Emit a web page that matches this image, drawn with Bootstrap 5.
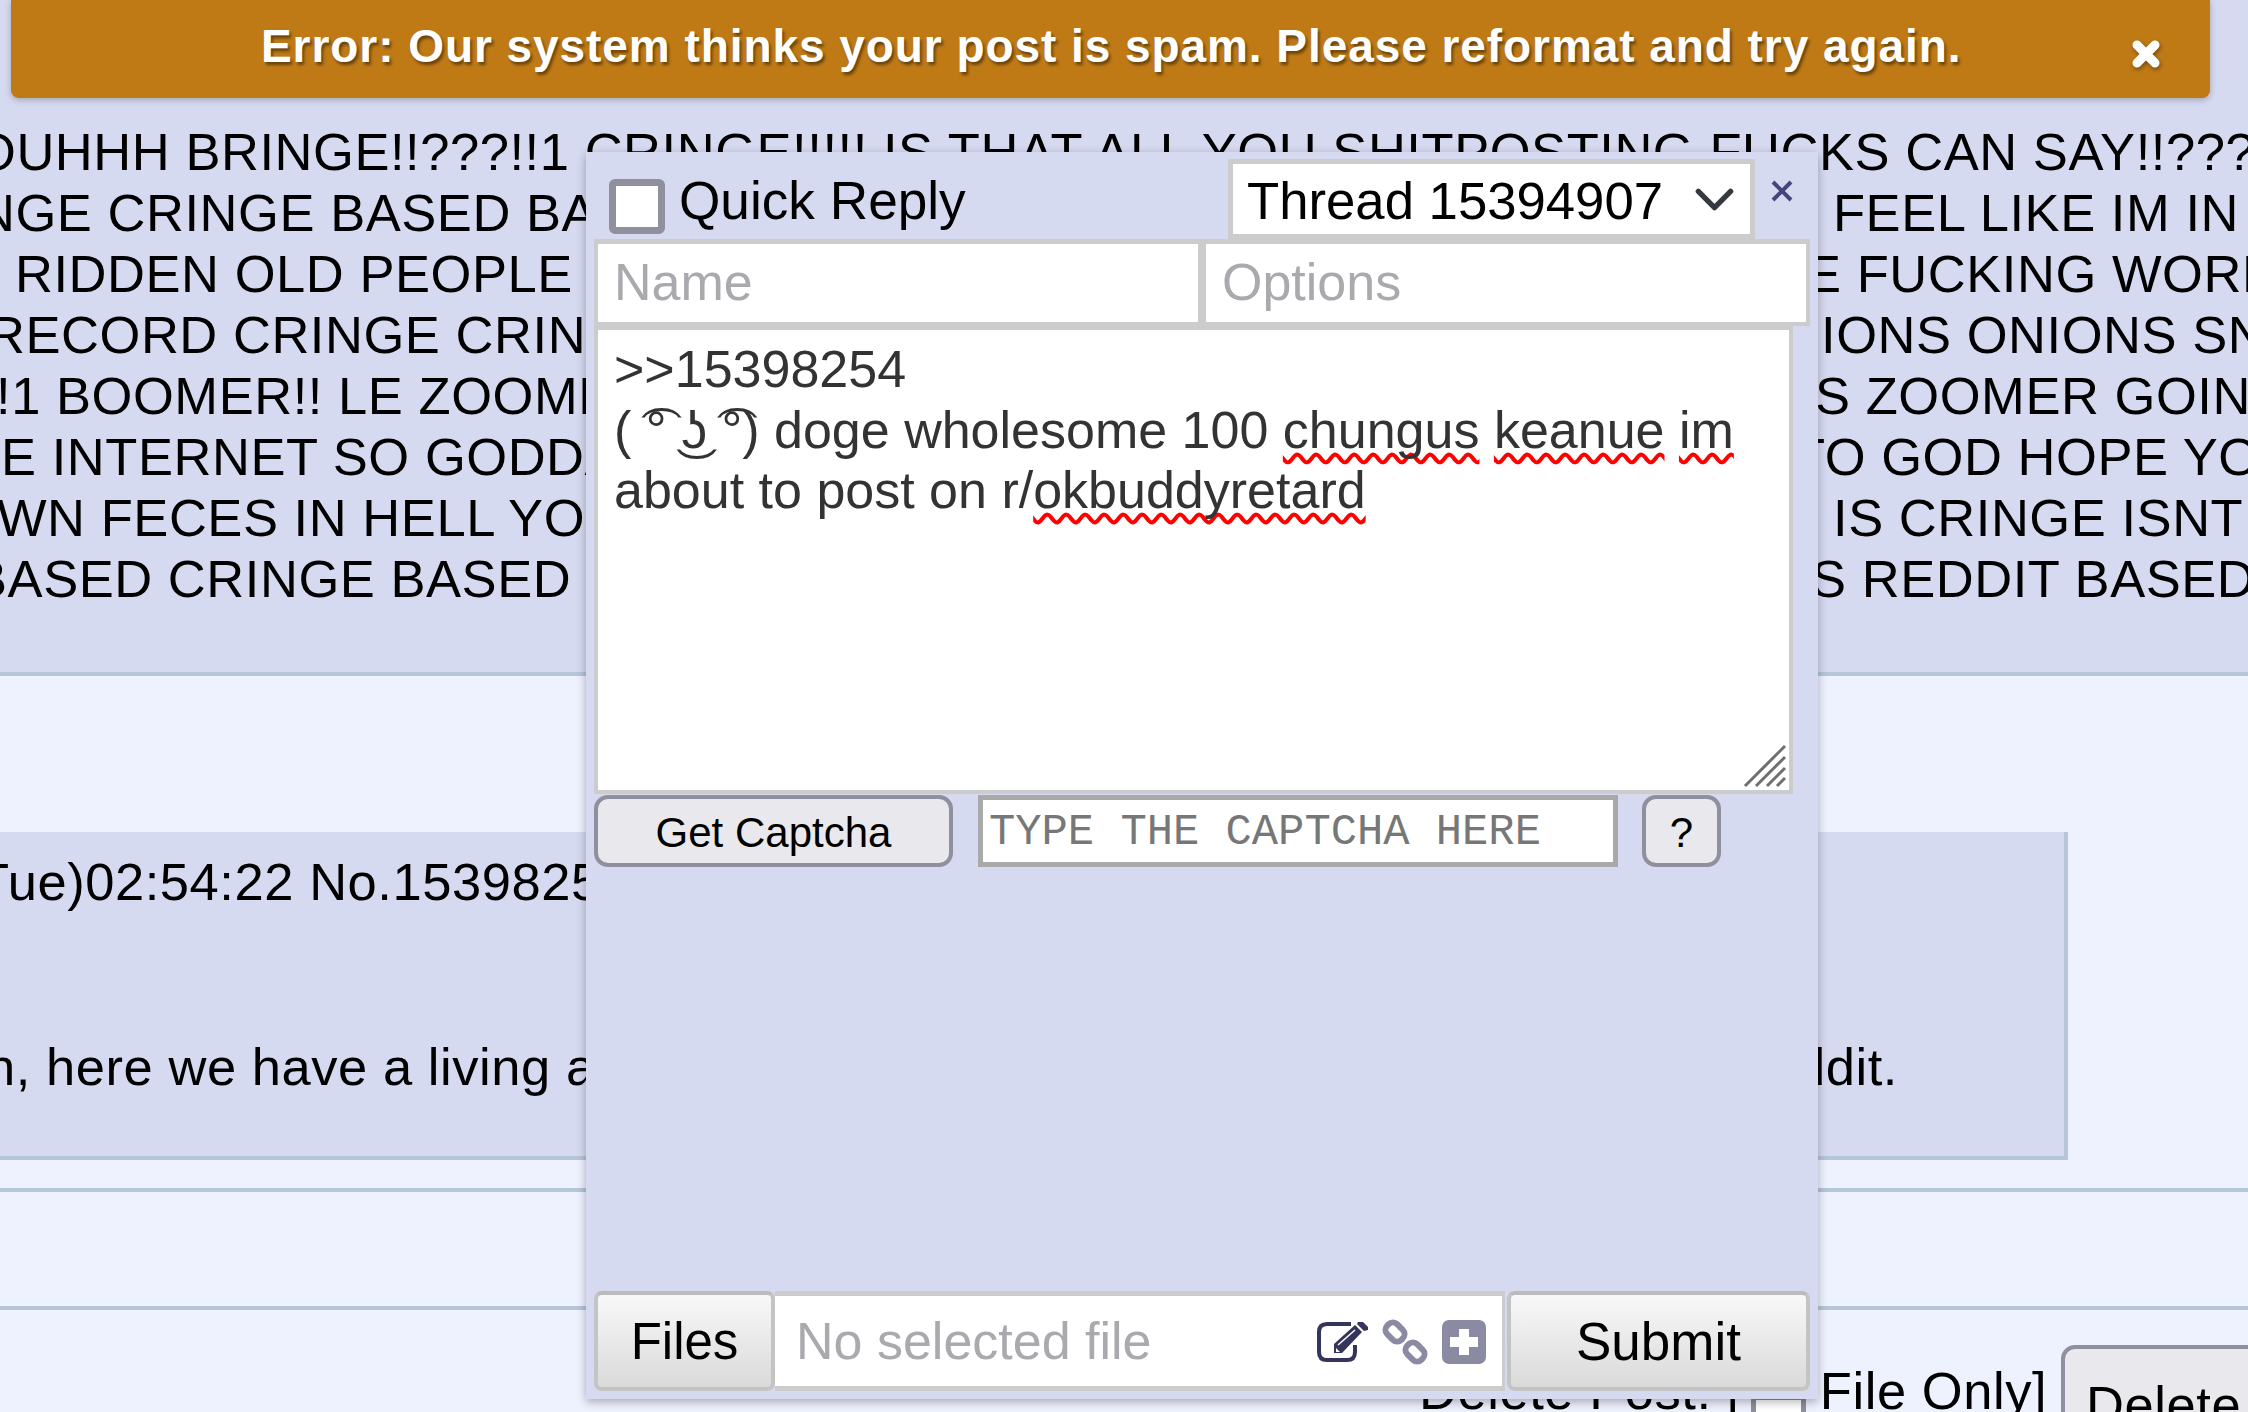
<!DOCTYPE html>
<html lang="en">
<head>
    <meta charset="UTF-8">
    <meta name="viewport" content="width=device-width, initial-scale=1.0">
    <title>Quick Reply</title>
    <link href="https://cdn.jsdelivr.net/npm/bootstrap@5.3.0/dist/css/bootstrap.min.css" rel="stylesheet">
    <style>
        html, body { height: 1412px; overflow: hidden; }
        body {
            background: #eef2ff;
            color: #000;
            font-family: "Liberation Sans", Arial, sans-serif;
            font-size: 52.5px;
            letter-spacing: .55px;
            line-height: 61px;
        }
        /* error toast */
        .toast-bar {
            position: absolute;
            top: 0; left: 11px;
            width: 2199px; height: 98px;
            background: #bf7a16;
            border-radius: 0 0 8px 8px;
            box-shadow: 0 2px 6px rgba(0,0,0,.25);
            color: #fff;
            font-size: 46px;
            font-weight: 700;
            letter-spacing: .94px;
            line-height: 93px;
            padding-left: 250px;
            text-shadow: 2px 3px 3px rgba(0,0,0,.45);
            z-index: 20;
        }
        .toast-close {
            position: absolute;
            top: 38px; left: 2119px;
            filter: drop-shadow(1px 2px 2px rgba(0,0,0,.4));
        }
        /* post behind the panel */
        .wall-post {
            height: 676px;
            padding-top: 121px;
            background: #d6daf0;
            border-bottom: 4px solid #b7c5d9;
        }
        .wall-row { display: grid; grid-template-columns: 1800px 448px; white-space: nowrap; height: 61px; }
        .wall-full { grid-column: 1 / 3; }
        .li1 { text-indent: -25px; }
        .li2 { text-indent: -23px; }
        .li3 { text-indent: 15px; }
        .li4 { text-indent: -13px; }
        .li5 { text-indent: -4px; }
        .li6 { text-indent: 1px; }
        .li7 { text-indent: -3px; }
        .li8 { text-indent: -28px; }
        .ri2 { text-indent: 33px; }
        .ri3 { text-indent: 6px; }
        .ri4 { text-indent: 21px; }
        .ri5 { text-indent: 15px; }
        .ri6 { text-indent: -7px; }
        .ri7 { text-indent: 33px; }
        .ri8 { text-indent: 11px; }

        .reply-post {
            width: 2068px; height: 328px;
            margin-top: 156px;
            background: #d6daf0;
            border-right: 4px solid #b7c5d9;
            border-bottom: 4px solid #b7c5d9;
            white-space: nowrap;
        }
        .reply-head { height: 204px; padding-top: 19px; text-indent: -41px; }
        .reply-body { display: grid; grid-template-columns: 1796px auto; }
        .reply-body > span:first-child { text-indent: -14px; }
        .rule-line { height: 4px; background: #b7c5d9; }
        .rule-a { margin-top: 28px; }
        .rule-b { margin-top: 114px; }
        .delete-row { display: flex; align-items: flex-start; margin-top: 35px; padding-left: 1419px; white-space: nowrap; }
        .delete-label { padding-top: 15px; }
        .delete-check {
            flex: none;
            width: 55px; height: 55px;
            margin: 50px 14px 0 9px;
            background: #fff;
            border: 5px solid #8f8f9d;
            border-radius: 4px;
        }
        .delete-btn.btn {
            flex: none;
            width: 240px; height: 110px;
            margin-left: 14px;
            background: #e9e9ed;
            border: 4px solid #8f8f9d;
            border-radius: 14px;
            color: #000;
            font-size: 52.5px;
            letter-spacing: .55px;
            line-height: 50px;
            text-align: left;
            padding: 9px 0 0 21px;
        }

        /* quick reply panel */
        .qr-panel {
            position: absolute;
            top: 152px; left: 586px;
            width: 1232px; height: 1247px;
            background: #d6daf0;
            box-shadow: 0 3px 9px rgba(0,0,0,.3);
            padding: 7px 8px 8px 8px;
            display: flex;
            flex-direction: column;
            letter-spacing: 0;
            font-size: 52px;
            z-index: 10;
        }
        .qr-head { height: 80px; display: flex; align-items: flex-start; }
        .qr-check {
            flex: none;
            width: 56px; height: 55px;
            margin: 20px 14px 0 15px;
            background: #fff;
            border: 7px solid #8f8f9d;
            border-radius: 6px;
        }
        .qr-title { font-size: 53.2px; line-height: 50px; margin-top: 17px; flex: 1; }
        .qr-select.form-select {
            flex: none;
            width: 527px; height: 80px;
            padding: 4px 0 0 14px;
            border: 5px solid #ccc;
            border-radius: 0;
            color: #000;
            font-family: inherit;
            font-size: 52.7px;
            line-height: 66px;
            background-position: right 14px center;
            background-size: 43px 43px;
        }
        .qr-close { flex: none; width: 55px; padding: 20px 0 0 15px; line-height: 0; }
        .qr-fields { display: flex; height: 87px; }
        .qr-input.form-control {
            border: 4px solid #ccc;
            border-top-width: 5px;
            border-radius: 0;
            font-family: inherit;
            font-size: 52px;
            line-height: 58px;
            padding: 0 0 2px 16px;
            color: #333;
        }
        .qr-input.form-control::placeholder { color: #a9a9ae; opacity: 1; }
        .qr-name { width: 608px; flex: none; }
        .qr-opts { width: 608px; flex: none; }
        .qr-text {
            width: 1199px; height: 468px;
            background: #fff;
            border: 4px solid #ccc;
            color: #333;
            padding: 9px 0 0 16px;
            line-height: 60.6px;
            white-space: nowrap;
            position: relative;
        }
        .spell-mark { text-decoration: underline wavy #f00 4px; text-decoration-skip-ink: none; text-underline-offset: 5px; }
        .qr-grip { position: absolute; right: 2px; bottom: 2px; }
        .qr-captcha { display: flex; height: 72px; margin-top: 1px; }
        .qr-btn.btn {
            background: #e9e9ed;
            border: 4px solid #8f8f9d;
            border-radius: 14px;
            color: #000;
            font-size: 42px;
            line-height: 50px;
            padding: 4px 0 0;
        }
        .qr-get { width: 359px; }
        .qr-help { width: 79px; margin-left: 24px; }
        .qr-code {
            width: 640px;
            margin-left: 25px;
            background: #fff;
            border: 5px solid #a9a9a9;
            padding: 3px 0 0 6px;
            font-family: "Liberation Mono", "Courier New", monospace;
            font-size: 43.8px;
            letter-spacing: 0;
            outline: none;
        }
        .qr-code::placeholder { color: #777; opacity: 1; }
        .qr-foot { display: flex; height: 100px; margin-top: auto; }
        .qr-grad.btn {
            background: linear-gradient(#f8f8f8, #dadada);
            border: 4px solid #c4c4c4;
            border-top-color: #bbb;
            border-radius: 8px;
            color: #000;
            font-size: 51px;
            line-height: 60px;
            padding: 2px 0 0;
        }
        .qr-files { width: 181px; }
        .qr-submit { width: 303px; margin-left: 2px; font-size: 53px !important; }
        .qr-file {
            width: 730px;
            background: #fff;
            border-top: 5px solid #ccc;
            border-bottom: 5px solid #ccc;
            border-right: 3px solid #ccc;
            color: #a9a9ae;
            padding-left: 21px;
            display: flex;
            align-items: center;
        }
        .qr-file-name { flex: 1; }
        .qr-icons { display: flex; align-items: center; gap: 13px; padding-right: 16px; padding-top: 2px; }
    </style>
</head>
<body>
    <div class="toast-bar">Error: Our system thinks your post is spam. Please reformat and try again.
        <svg class="toast-close" width="32" height="32" viewBox="0 0 32 32"><path d="M7 7 L25 25 M25 7 L7 25" stroke="#fff" stroke-width="9" stroke-linecap="round"/></svg>
    </div>

    <!-- Page behind the panel -->
    <div class="wall-post">
        <div class="wall-row"><div class="wall-full li1">OUHHH BRINGE!!???!!1 CRINGE!!!!! IS THAT ALL YOU SHITPOSTING FUCKS CAN SAY!!???</div></div>
        <div class="wall-row"><div class="li2">NGE CRINGE BASED BASED</div><div class="ri2">FEEL LIKE IM IN A</div></div>
        <div class="wall-row"><div class="li3">RIDDEN OLD PEOPLE</div><div class="ri3">E FUCKING WORLD</div></div>
        <div class="wall-row"><div class="li4">RECORD CRINGE CRINGE</div><div class="ri4">IONS ONIONS SNOY</div></div>
        <div class="wall-row"><div class="li5">!1 BOOMER!! LE ZOOMER</div><div class="ri5">S ZOOMER GOING</div></div>
        <div class="wall-row"><div class="li6">E INTERNET SO GODDAMN</div><div class="ri6">TO GOD HOPE YOU</div></div>
        <div class="wall-row"><div class="li7">WN FECES IN HELL YOU</div><div class="ri7">IS CRINGE ISNT IT</div></div>
        <div class="wall-row"><div class="li8">BASED CRINGE BASED</div><div class="ri8">S REDDIT BASED</div></div>
    </div>

    <div class="reply-post">
        <div class="reply-head">(Tue)02:54:22 No.15398254</div>
        <div class="reply-body"><span>n, here we have a living and</span><span>ddit.</span></div>
    </div>
    <div class="rule-line rule-a"></div>
    <div class="rule-line rule-b"></div>
    <div class="delete-row">
        <span class="delete-label">Delete Post: [</span>
        <span class="delete-check"></span>
        <span class="delete-label">File Only]</span>
        <button class="btn delete-btn" type="button">Delete</button>
    </div>

    <!-- Quick reply window -->
    <form class="qr-panel">
        <div class="qr-head">
            <span class="qr-check"></span>
            <span class="qr-title">Quick Reply</span>
            <select class="form-select qr-select"><option>Thread 15394907</option></select>
            <span class="qr-close">
                <svg width="24" height="24" viewBox="0 0 24 24"><path d="M3 3 L21 21 M21 3 L3 21" stroke="#44457a" stroke-width="4"/></svg>
            </span>
        </div>
        <div class="qr-fields">
            <input class="form-control qr-input qr-name" placeholder="Name">
            <input class="form-control qr-input qr-opts" placeholder="Options">
        </div>
        <div class="qr-text">&gt;&gt;15398254<br>( ͡° ͜ʖ ͡°) doge wholesome 100 <span class="spell-mark">chungus</span> <span class="spell-mark">keanue</span> <span class="spell-mark">im</span><br>about to post on r/<span class="spell-mark">okbuddyretard</span>
            <svg class="qr-grip" width="44" height="44" viewBox="0 0 44 44"><path d="M2 42 L42 2 M13 42 L42 13 M24 42 L42 24 M34 42 L42 34" stroke="#6f6f6f" stroke-width="3"/></svg>
        </div>
        <div class="qr-captcha">
            <button class="btn qr-btn qr-get" type="button">Get Captcha</button>
            <input class="qr-code" placeholder="TYPE THE CAPTCHA HERE">
            <button class="btn qr-btn qr-help" type="button">?</button>
        </div>
        <div class="qr-foot">
            <button class="btn qr-grad qr-files" type="button">Files</button>
            <div class="qr-file">
                <span class="qr-file-name">No selected file</span>
                <span class="qr-icons">
                    <svg width="52" height="42" viewBox="0 0 52 42">
                        <path d="M35 3 H11 Q3 3 3 11 V31 Q3 39 11 39 H31 Q39 39 39 31 V24" fill="none" stroke="#34345c" stroke-width="4"/>
                        <path d="M18 32 L18 23 L39 4 L46 11 L26 32 Z" fill="#34345c"/>
                        <path d="M42 1 L47 1 L52 6 L52 9 L48 10 L41 3 Z" fill="#34345c"/>
                        <path d="M22 24 L39 9" stroke="#fff" stroke-width="1.5"/>
                        <path d="M20 27 L24 31 L20 31 Z" fill="#fff"/>
                    </svg>
                    <svg width="48" height="48" viewBox="0 0 48 48" fill="none" stroke="#8a8aa3" stroke-width="6">
                        <rect x="4" y="7" width="20" height="14" rx="6" transform="rotate(45 14 14)"/>
                        <rect x="24" y="27" width="20" height="14" rx="6" transform="rotate(45 34 34)"/>
                    </svg>
                    <svg width="44" height="44" viewBox="0 0 44 44">
                        <rect width="44" height="44" rx="7" fill="#8a8aa3"/>
                        <path d="M22 9 V35 M8 22 H36" stroke="#fff" stroke-width="10"/>
                    </svg>
                </span>
            </div>
            <button class="btn qr-grad qr-submit" type="button">Submit</button>
        </div>
    </form>

    <script src="https://cdn.jsdelivr.net/npm/bootstrap@5.3.0/dist/js/bootstrap.bundle.min.js"></script>
</body>
</html>
